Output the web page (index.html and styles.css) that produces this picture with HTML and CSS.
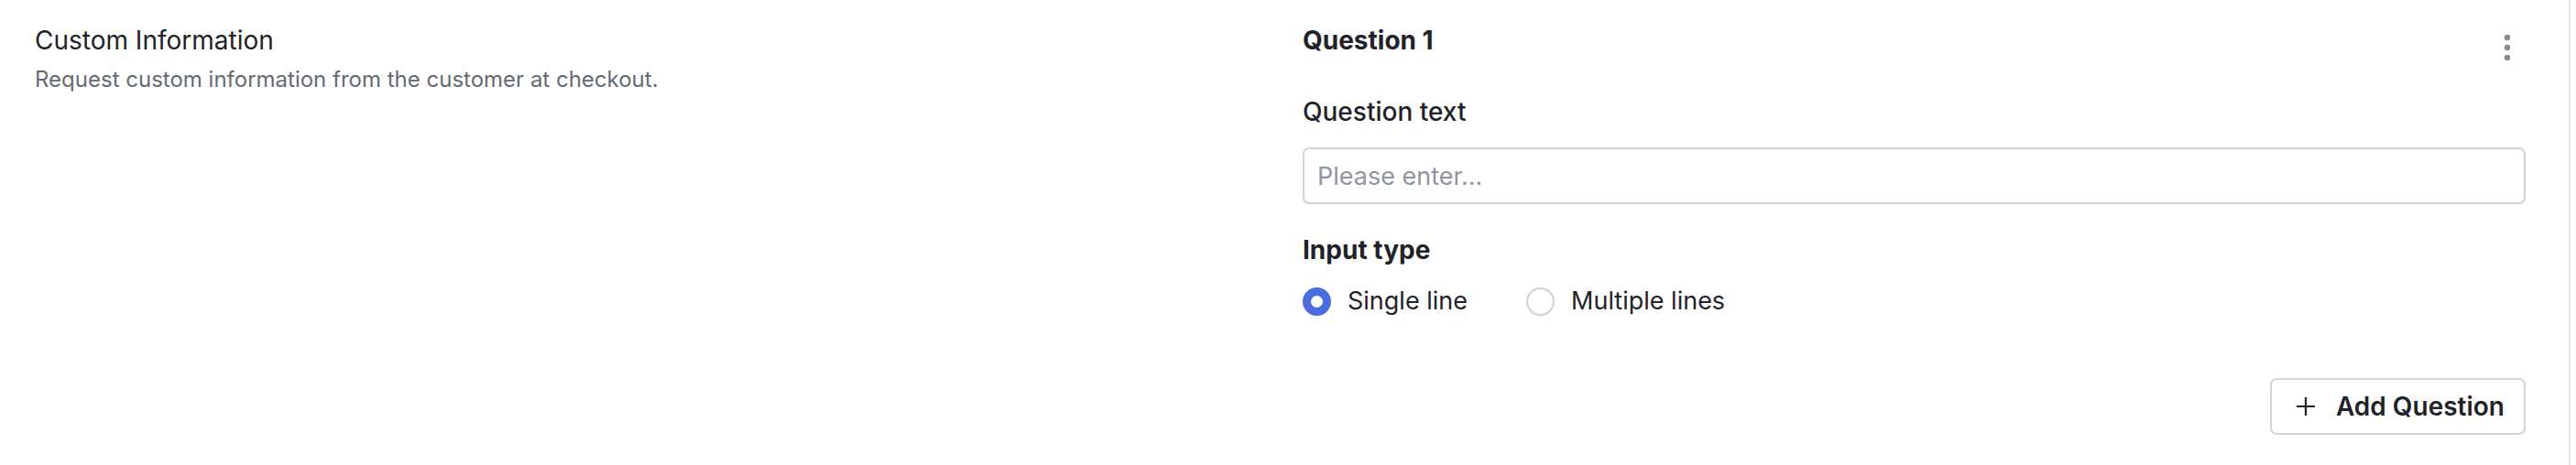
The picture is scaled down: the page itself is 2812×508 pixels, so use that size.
FILE: index.html
```html
<!DOCTYPE html>
<html lang="en">
<head>
<meta charset="utf-8">
<title>Custom Information</title>
<link rel="stylesheet" href="styles.css">
</head>
<body>
<div class="page">
  <div class="intro">
    <div class="intro-title">Custom Information</div>
    <div class="intro-desc">Request custom information from the customer at checkout.</div>
  </div>
  <div class="editor">
    <div class="question-head">
      <div class="question-title">Question 1</div>
      <button class="kebab" type="button" aria-label="More">
        <svg width="8" height="30" viewBox="0 0 8 30"><circle cx="4" cy="4" r="3.2" fill="#8a8a8e"/><circle cx="4" cy="15" r="3.2" fill="#8a8a8e"/><circle cx="4" cy="26" r="3.2" fill="#8a8a8e"/></svg>
      </button>
    </div>
    <label class="field-label">Question text</label>
    <input class="text-input" type="text" placeholder="Please enter...">
    <div class="group-label">Input type</div>
    <div class="radio-row">
      <label class="radio"><span class="radio-dot checked"></span><span class="radio-text">Single line</span></label>
      <label class="radio"><span class="radio-dot"></span><span class="radio-text">Multiple lines</span></label>
    </div>
    <div class="actions">
      <button class="add-btn" type="button">
        <svg width="22" height="22" viewBox="0 0 22 22"><path d="M11 1v20M1 11h20" stroke="#1f2329" stroke-width="2.2" fill="none"/></svg>
        <span>Add Question</span>
      </button>
    </div>
  </div>
</div>
</body>
</html>
```
FILE: styles.css
```css
html, body {
  margin: 0;
  padding: 0;
  background: #ffffff;
}
body {
  font-family: Inter, "Noto Sans", "Liberation Sans", sans-serif;
  color: #1f2329;
}
.page {
  width: 2806px;
  height: 508px;
  box-sizing: border-box;
  border-right: 2px solid #e4e4e9;
  padding: 24px 47px 0 38px;
  display: grid;
  grid-template-columns: 1384px 1fr;
}
.intro-title {
  font-size: 28px;
  line-height: 40px;
  font-weight: 400;
  color: #1f2329;
}
.intro-desc {
  margin-top: 7px;
  font-size: 24px;
  line-height: 32px;
  color: #646a73;
}
.editor {
  display: flex;
  flex-direction: column;
}
.question-head {
  display: flex;
  justify-content: space-between;
  align-items: flex-start;
  height: 56px;
}
.question-title {
  font-size: 28px;
  line-height: 40px;
  font-weight: 700;
}
.kebab {
  width: 40px;
  height: 56px;
  border: 0;
  padding: 0;
  background: transparent;
  display: flex;
  align-items: center;
  justify-content: center;
}
.field-label {
  margin-top: 22px;
  font-size: 28px;
  line-height: 40px;
  font-weight: 500;
}
.text-input {
  margin-top: 19px;
  height: 62px;
  box-sizing: border-box;
  border: 2px solid #d0d3d8;
  border-radius: 7px;
  padding: 0 14px;
  font-family: inherit;
  font-size: 27px;
  color: #1f2329;
  outline: none;
}
.text-input::placeholder {
  color: #8f959e;
}
.group-label {
  margin-top: 30px;
  font-size: 28px;
  line-height: 40px;
  font-weight: 700;
}
.radio-row {
  margin-top: 16px;
  display: flex;
  gap: 64px;
  height: 40px;
  align-items: center;
}
.radio {
  display: flex;
  align-items: center;
  gap: 18px;
}
.radio-dot {
  width: 31px;
  height: 31px;
  box-sizing: border-box;
  border-radius: 50%;
  border: 2px solid #cfd0d6;
  background: #fff;
}
.radio-dot.checked {
  border: 9.5px solid #4a6ee0;
}
.radio-text {
  font-size: 27px;
  line-height: 40px;
}
.actions {
  margin-top: 64px;
  display: flex;
  justify-content: flex-end;
}
.add-btn {
  height: 62px;
  box-sizing: border-box;
  border: 2px solid #d3d3da;
  border-radius: 7px;
  background: #fff;
  padding: 0 21px 0 26px;
  display: flex;
  align-items: center;
  gap: 22px;
  font-family: inherit;
  font-size: 28px;
  font-weight: 600;
  color: #1f2329;
}
```
